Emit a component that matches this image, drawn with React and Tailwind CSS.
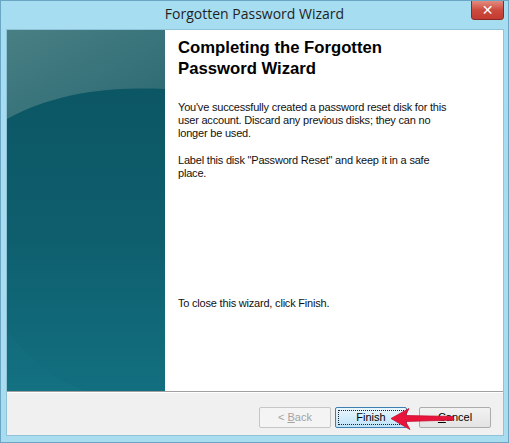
import React from "react";

function LeftPanel() {
  return (
    <svg width="158" height="361" viewBox="0 0 158 361" className="block">
      <defs>
        <linearGradient id="lower" x1="0" y1="0" x2="0" y2="1">
          <stop offset="0" stopColor="#0b5361" />
          <stop offset="0.55" stopColor="#0e5e6d" />
          <stop offset="1" stopColor="#126f7f" />
        </linearGradient>
        <linearGradient id="upper" x1="0" y1="0" x2="1" y2="1">
          <stop offset="0" stopColor="#487f83" />
          <stop offset="0.6" stopColor="#37727a" />
          <stop offset="1" stopColor="#2b6870" />
        </linearGradient>
      </defs>
      <rect x="0" y="0" width="158" height="361" fill="url(#lower)" />
      <path d="M0 0 H158 V59 C 125 58, 60 56, 0 89 Z" fill="url(#upper)" />
      <path d="M0 300 C 20 330, 50 350, 80 361 L0 361 Z" fill="#1a7c8a" opacity="0.18" />
    </svg>
  );
}

function Arrow() {
  return (
    <svg
      width="70"
      height="26"
      viewBox="0 0 70 26"
      className="absolute left-[388px] top-[405px] pointer-events-none"
    >
      <path
        d="M2 12.5 L20 2.5 L16.5 9.5 L64 10.5 L65 14 L16.5 15.5 L21 23.5 Z"
        fill="#e8143c"
        stroke="#c40f30"
        strokeWidth="0.8"
        strokeLinejoin="round"
      />
    </svg>
  );
}

export default function App() {
  const sans = { fontFamily: '"Liberation Sans", Arial, sans-serif' };
  return (
    <div
      className="relative w-[509px] h-[443px] bg-gradient-to-b from-[#a6ddf1] to-[#aadcef] border border-[#6aa6c4] flex flex-col overflow-hidden"
      style={sans}
    >
      {/* Title bar */}
      <div className="relative h-[28px] flex items-center justify-center">
        <span
          className="text-[14px] text-[#1f1f1f] leading-none -mt-[2px]"
          style={{ fontFamily: '"Open Sans", "Noto Sans", sans-serif' }}
        >
          Forgotten Password Wizard
        </span>
        <div className="absolute right-[4px] -top-[1px] w-[33px] h-[20px] bg-gradient-to-b from-[#e38a7f] via-[#cd4a3f] to-[#c33a30] border border-[#8b2a24] rounded-b-[3px] flex items-center justify-center">
          <span className="text-white font-bold text-[14px] leading-none" style={{ fontFamily: '"DejaVu Sans", sans-serif' }}>
            ✕
          </span>
        </div>
      </div>

      {/* Client */}
      <div className="flex-1 flex flex-col ml-[5px] mr-[4px] mb-[6px] border border-[#8fc3d9]">
        <div className="flex h-[361px]">
          <div className="w-[158px] h-[361px]">
            <LeftPanel />
          </div>
          <div className="flex-1 bg-white pl-[13px] pt-[7px] pr-[10px]">
            <h1 className="text-[16.7px] leading-[21px] font-bold text-black">
              Completing the Forgotten
              <br />
              Password Wizard
            </h1>
            <div className="mt-[22px] text-[11px] leading-[13px] tracking-[-0.2px] text-[#111]">
              <p>
                You've successfully created a password reset disk for this
                <br />
                user account. Discard any previous disks; they can no
                <br />
                longer be used.
              </p>
              <p className="mt-[14px]">
                Label this disk "Password Reset" and keep it in a safe
                <br />
                place.
              </p>
              <p className="mt-[117px]">To close this wizard, click Finish.</p>
            </div>
          </div>
        </div>
        <div className="h-px bg-[#a0a0a0]" />
        <div className="h-px bg-white" />
        <div className="flex-1 bg-[#f0f0f0] flex items-start justify-end pt-[14px] pr-[12px]">
          <div className="w-[72px] h-[21px] border border-[#c6c6c6] rounded-[2px] bg-[#f4f4f4] flex items-center justify-center text-[11px] text-[#a3a3a3]">
            &lt; <span className="underline ml-[3px]">B</span>ack
          </div>
          <div className="ml-[4px] w-[72px] h-[21px] border border-[#3c7fb1] rounded-[2px] bg-gradient-to-b from-[#eaf6fd] to-[#bee4f8] p-[2px]">
            <div className="w-full h-full border border-dotted border-[#222] flex items-center justify-center text-[11px] text-black">
              Finish
            </div>
          </div>
          <div className="ml-[12px] w-[72px] h-[21px] border border-[#acacac] rounded-[2px] bg-gradient-to-b from-[#f2f2f2] to-[#e3e3e3] flex items-center justify-center text-[11px] text-black">
            <span className="underline">C</span>ancel
          </div>
        </div>
      </div>

      <Arrow />
    </div>
  );
}
